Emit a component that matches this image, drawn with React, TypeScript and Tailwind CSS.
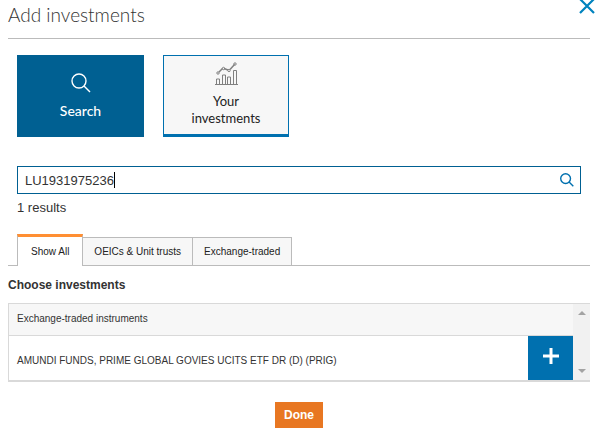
import { useState } from "react";
import { clsx } from "clsx";

const tabs = ["Show All", "OEICs & Unit trusts", "Exchange-traded"];

const results = [
  { id: "PRIG", name: "AMUNDI FUNDS, PRIME GLOBAL GOVIES UCITS ETF DR (D) (PRIG)" },
];

function SearchIcon({ className }: { className: string }) {
  return (
    <svg viewBox="0 0 20 20" fill="none" stroke="currentColor" className={className} aria-hidden="true">
      <circle cx="8" cy="8" r="7" />
      <path d="M13 13l6 6" />
    </svg>
  );
}

function ChartIcon() {
  return (
    <svg viewBox="0 0 24 24" fill="none" stroke="#808080" className="h-6 w-6" aria-hidden="true">
      <path d="M1 22.5h23M2.5 22v-5h3v5M8.5 22v-9h3v9M13.5 22v-7h3v7M19.5 22V8.5h3V22" />
      <path d="M5 10l3.5-3.500M10 6.500l4 1.500M16 7.500l4.500-5" strokeWidth="1.5" />
      <circle cx="4" cy="11" r="1.200" />
      <circle cx="9.500" cy="6.500" r="1.200" />
      <circle cx="15" cy="8.500" r="1.200" />
      <circle cx="21" cy="2" r="1.200" />
    </svg>
  );
}

export default function App() {
  const [query, setQuery] = useState("LU1931975236");
  const [activeTab, setActiveTab] = useState(tabs[0]);

  return (
    <div className="bg-white pl-2 font-['Liberation_Sans',Arial,sans-serif] text-[#333]">
      {/* Header */}
      <header className="mr-2 flex h-[39px] items-start justify-between border-b border-[#bbb]">
        <h1 className="pt-[3px] font-[Lato,sans-serif] text-[19px] leading-6 font-light">Add investments</h1>
        <button aria-label="Close" className="-mt-0.5 -mr-[5px] text-[#0083be]">
          <svg viewBox="0 0 16 16" fill="none" stroke="currentColor" strokeWidth="2.2" className="h-4 w-4">
            <path d="M1 1l14 14M15 1L1 15" />
          </svg>
        </button>
      </header>

      <main className="mr-2">
        {/* Source selection */}
        <div className="flex gap-[19px] px-[9px] pt-4 font-[Lato,sans-serif] text-[13px] leading-[17px]">
          <button className="flex h-[82px] w-[127px] flex-col items-center bg-[#006092] pt-[18px] text-white">
            <SearchIcon className="h-5 w-5 stroke-[1.4]" />
            <span className="mt-[9px] text-[14px] font-medium">Search</span>
          </button>
          <button className="flex h-[82px] w-[126px] flex-col items-center border border-b-3 border-[#0070af] bg-[#f7f7f7] px-5 pt-1.5">
            <ChartIcon />
            <span className="mt-[7px] text-[#222]">Your investments</span>
          </button>
        </div>

        {/* Search box */}
        <div className="px-[9px] pt-[29px]">
          <div className="flex h-7 items-center border border-[#006092] pr-1.5 pl-[7px]">
            <input
              autoFocus
              aria-label="Search investments"
              value={query}
              onChange={(e) => setQuery(e.target.value)}
              className="field-sizing-content min-w-0 pt-0.5 text-[13px] leading-5 caret-transparent outline-none"
            />
            <span className="h-4 w-px bg-black" />
            <button aria-label="Search" className="ml-auto text-[#0070af]">
              <SearchIcon className="h-3.5 w-3.5 stroke-2" />
            </button>
          </div>
          <p className="pt-1 text-[13px] leading-5">{results.length} results</p>
        </div>

        {/* Tabs */}
        <div role="tablist" className="mt-4 flex items-end text-[10px] leading-4 text-[#222]">
          <span className="w-[9px] border-b border-[#bbb]" />
          {tabs.map((tab, i) => (
            <button
              key={tab}
              role="tab"
              aria-selected={tab === activeTab}
              onClick={() => setActiveTab(tab)}
              className={clsx(
                "border-r border-[#bbb]",
                i === 0 ? "border-l px-[13px]" : "px-[11px]",
                tab === activeTab
                  ? "h-8 border-t-3 border-t-[#ff8f33] bg-white"
                  : "h-[29px] border-t border-b bg-[#f7f7f7]",
              )}
            >
              {tab}
            </button>
          ))}
          <span className="grow border-b border-[#bbb]" />
        </div>

        {/* Results */}
        <h2 className="pt-[9px] text-[12px] leading-5 font-bold">Choose investments</h2>
        <div className="mt-2 flex border border-b-2 border-r-0 border-[#d9d9d9]">
          <table className="grow border-collapse text-left text-[10px] leading-4">
            <thead>
              <tr className="h-[31px] border-b border-[#d9d9d9] bg-[#f7f7f7]">
                <th scope="col" colSpan={2} className="px-2 font-normal">Exchange-traded instruments</th>
              </tr>
            </thead>
            <tbody>
              {results.map((result) => (
                <tr key={result.id} className="h-11">
                  <td className="px-2 pt-1.5">{result.name}</td>
                  <td className="w-[45px] p-0">
                    <button aria-label={`Add ${result.name}`} className="flex h-11 w-[45px] items-center justify-center bg-[#0070af] pb-1 text-white">
                      <svg viewBox="0 0 16 16" stroke="currentColor" strokeWidth="3" className="h-4 w-4">
                        <path d="M8 0v16M0 8h16" />
                      </svg>
                    </button>
                  </td>
                </tr>
              ))}
            </tbody>
          </table>
          <div className="flex w-[17px] flex-col items-center justify-between bg-[#f1f1f1] py-[7px] text-[#a3a3a3]">
            <button aria-label="Scroll up">
              <svg viewBox="0 0 8 4" fill="currentColor" className="h-1 w-2"><path d="M4 0l4 4H0z" /></svg>
            </button>
            <button aria-label="Scroll down">
              <svg viewBox="0 0 8 4" fill="currentColor" className="h-1 w-2"><path d="M0 0h8L4 4z" /></svg>
            </button>
          </div>
        </div>

        <div className="flex justify-center pt-5 pb-1">
          <button className="h-[26px] w-12 bg-[#e87722] text-[12px] leading-4 font-bold text-white">Done</button>
        </div>
      </main>
    </div>
  );
}
